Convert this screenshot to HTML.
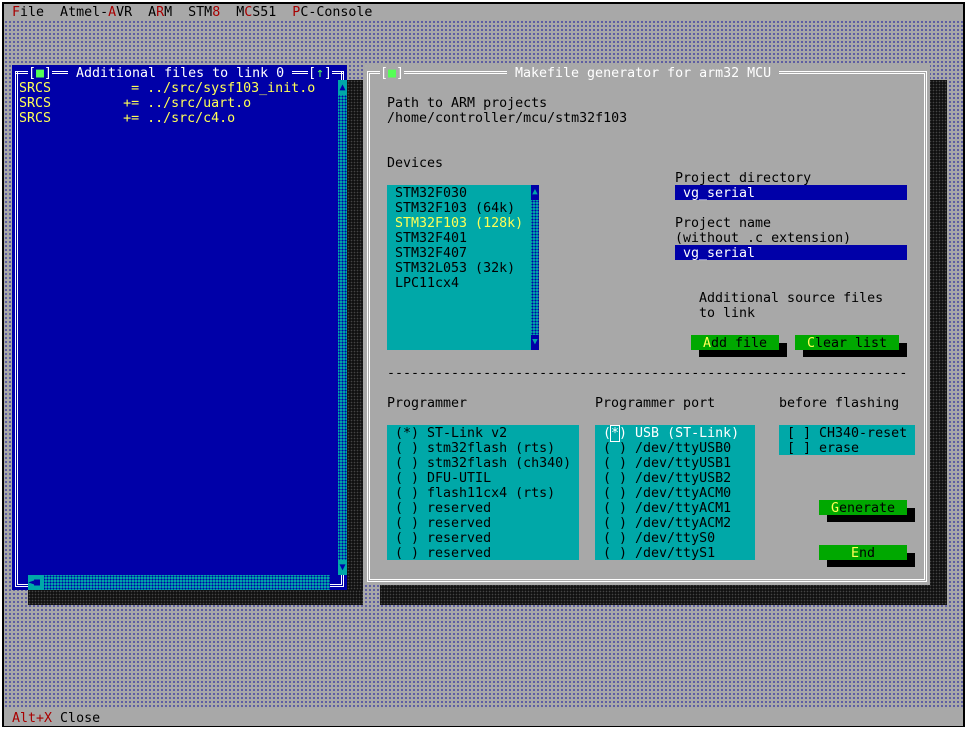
<!DOCTYPE html>
<html><head><meta charset="utf-8"><style>
*{margin:0;padding:0;box-sizing:border-box}
body{width:967px;height:730px;background:#fff;position:relative;overflow:hidden;font-family:"DejaVu Sans Mono","Liberation Mono",monospace;font-size:13.3px;line-height:15px}
.a{position:absolute;white-space:pre}
.t{padding-top:1px}
#scr{position:absolute;left:2px;top:2px;width:963px;height:725px;border:2px solid #000;background:#a8a8a8;
background-image:radial-gradient(circle,#4a4aa0 0.8px,transparent 1.1px);background-size:4px 4px}
.bar{background:#a8a8a8;color:#000}
.r{color:#a80000}
.blue{background:#0000a8}
.cyan{background:#00a8a8}
.gray{background:#a8a8a8}
.sh{background:#111;background-image:radial-gradient(circle,#444 0.6px,transparent 1px);background-size:3px 3px}
.btn{background:#00a800;color:#000;text-align:center;padding-top:1px}
.y{color:#ffff55}
.w{color:#fff}
</style></head><body>
<div id="scr"></div>
<div class="a bar" style="left:4px;top:4px;width:959px;height:17px;padding-top:1px"> <span class="r">F</span>ile  Atmel-<span class="r">A</span>VR  A<span class="r">R</span>M  STM<span class="r">8</span>  M<span class="r">C</span>S51  <span class="r">P</span>C-Console</div>
<div class="a bar" style="left:4px;top:709px;width:959px;height:17px;padding-top:2px"> <span class="r">Alt+X</span> Close</div>

<!-- left window -->
<div class="a sh" style="left:347px;top:80px;width:16px;height:525px"></div>
<div class="a sh" style="left:28px;top:590px;width:335px;height:15px"></div>
<div class="a blue" style="left:12px;top:65px;width:335px;height:525px"></div>
<div class="a" style="left:15px;top:71px;width:329px;height:516px;border:3px double #fff;border-top:none"></div>
<div class="a w" style="left:15px;top:71px;width:329px;height:0;border-top:3px double #fff"></div>
<div class="a w blue t" style="left:28px;top:65px">[<span style="color:#55ff55">■</span>]</div>
<div class="a w blue t" style="left:68px;top:65px"> Additional files to link 0 </div>
<div class="a w blue t" style="left:308px;top:65px">[<span style="color:#55ff55">↑</span>]</div>
<div class="a y t" style="left:19px;top:80px">SRCS          = ../src/sysf103_init.o
SRCS         += ../src/uart.o
SRCS         += ../src/c4.o</div>
<div class="a cyan" style="left:338px;top:80px;width:9px;height:495px;background-image:radial-gradient(circle,#0000a8 0.8px,transparent 1.1px);background-size:3px 3px"></div>
<div class="a" style="left:338px;top:80px;width:9px;height:15px;background:#00a8a8;color:#0000a8;font-size:10px;text-align:center">▲</div>
<div class="a" style="left:338px;top:560px;width:9px;height:15px;background:#00a8a8;color:#0000a8;font-size:10px;text-align:center">▼</div>
<div class="a cyan" style="left:28px;top:575px;width:302px;height:15px;background-image:radial-gradient(circle,#0000a8 0.8px,transparent 1.1px);background-size:3px 3px"></div>
<div class="a" style="left:28px;top:575px;width:16px;height:15px;background:#00a8a8;color:#0000a8;font-size:10px">◄■</div>

<!-- right dialog -->
<div class="a sh" style="left:380px;top:80px;width:567px;height:525px"></div>
<div class="a gray" style="left:364px;top:65px;width:566px;height:520px"></div>
<div class="a" style="left:367px;top:71px;width:560px;height:511px;border:3px double #fff"></div>
<div class="a gray w t" style="left:380px;top:65px">[<span style="color:#55ff55">■</span>]</div>
<div class="a gray w t" style="left:507px;top:65px"> Makefile generator for arm32 MCU </div>
<div class="a t" style="left:387px;top:95px">Path to ARM projects
/home/controller/mcu/stm32f103</div>
<div class="a t" style="left:387px;top:155px">Devices</div>
<div class="a cyan" style="left:387px;top:185px;width:144px;height:165px"></div>
<div class="a t" style="left:387px;top:185px"> STM32F030
 STM32F103 (64k)
<span class="y"> STM32F103 (128k)</span>
 STM32F401
 STM32F407
 STM32L053 (32k)
 LPC11cx4</div>
<div class="a cyan" style="left:531px;top:185px;width:8px;height:165px;background-image:radial-gradient(circle,#0000a8 0.8px,transparent 1.1px);background-size:3px 3px"></div>
<div class="a" style="left:531px;top:185px;width:8px;height:15px;background:#0000a8;color:#00a8a8;font-size:9px;text-align:center">▲</div>
<div class="a" style="left:531px;top:335px;width:8px;height:15px;background:#0000a8;color:#00a8a8;font-size:9px;text-align:center">▼</div>

<div class="a t" style="left:675px;top:170px">Project directory</div>
<div class="a blue w t" style="left:675px;top:185px;width:232px;height:15px"> vg_serial</div>
<div class="a t" style="left:675px;top:215px">Project name
(without .c extension)</div>
<div class="a blue w t" style="left:675px;top:245px;width:232px;height:15px"> vg_serial</div>
<div class="a t" style="left:699px;top:290px">Additional source files
to link</div>

<div class="a btn" style="left:691px;top:335px;width:88px;height:15px"><span class="y">A</span>dd file</div>
<div class="a" style="left:779px;top:343px;width:8px;height:7px;background:#000"></div>
<div class="a" style="left:699px;top:350px;width:88px;height:7px;background:#000"></div>
<div class="a btn" style="left:795px;top:335px;width:104px;height:15px"><span class="y">C</span>lear list</div>
<div class="a" style="left:899px;top:343px;width:8px;height:7px;background:#000"></div>
<div class="a" style="left:803px;top:350px;width:104px;height:7px;background:#000"></div>

<div class="a t" style="left:387px;top:365px">-----------------------------------------------------------------</div>
<div class="a t" style="left:387px;top:395px">Programmer</div>
<div class="a t" style="left:595px;top:395px">Programmer port</div>
<div class="a t" style="left:779px;top:395px">before flashing</div>

<div class="a cyan" style="left:387px;top:425px;width:192px;height:135px"></div>
<div class="a t" style="left:387px;top:425px"> (*) ST-Link v2
 ( ) stm32flash (rts)
 ( ) stm32flash (ch340)
 ( ) DFU-UTIL
 ( ) flash11cx4 (rts)
 ( ) reserved
 ( ) reserved
 ( ) reserved
 ( ) reserved</div>
<div class="a cyan" style="left:595px;top:425px;width:160px;height:135px"></div>
<div class="a t" style="left:595px;top:425px"><span class="w"> (<span style="outline:1px solid #fff">*</span>) USB (ST-Link)</span>
 ( ) /dev/ttyUSB0
 ( ) /dev/ttyUSB1
 ( ) /dev/ttyUSB2
 ( ) /dev/ttyACM0
 ( ) /dev/ttyACM1
 ( ) /dev/ttyACM2
 ( ) /dev/ttyS0
 ( ) /dev/ttyS1</div>
<div class="a cyan" style="left:779px;top:425px;width:136px;height:30px"></div>
<div class="a t" style="left:779px;top:425px"> [ ] CH340-reset
 [ ] erase</div>

<div class="a btn" style="left:819px;top:500px;width:88px;height:15px"><span class="y">G</span>enerate</div>
<div class="a" style="left:907px;top:508px;width:8px;height:7px;background:#000"></div>
<div class="a" style="left:827px;top:515px;width:88px;height:7px;background:#000"></div>
<div class="a btn" style="left:819px;top:545px;width:88px;height:15px"><span class="y">E</span>nd</div>
<div class="a" style="left:907px;top:553px;width:8px;height:7px;background:#000"></div>
<div class="a" style="left:827px;top:560px;width:88px;height:7px;background:#000"></div>
</body></html>
